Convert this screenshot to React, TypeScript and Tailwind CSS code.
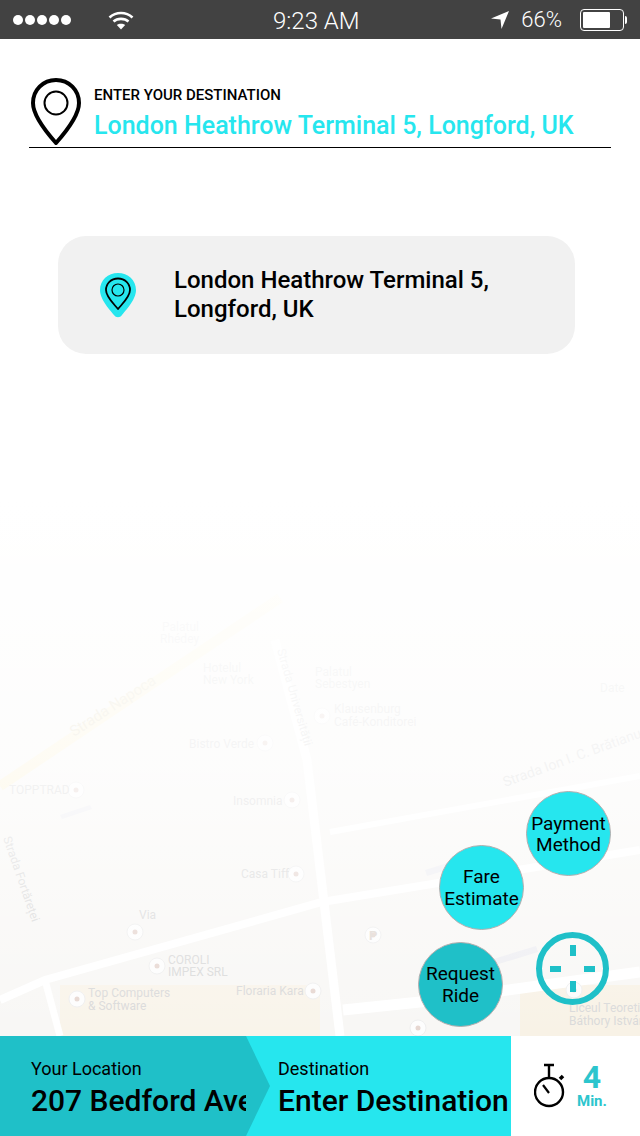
import React from 'react'

const font = "font-['Roboto',sans-serif]"

const labels: { x: number; y: number; t: string; rotate?: number; size?: number; fill?: string }[] = [
    { x: 162, y: 631, t: 'Palatul' },
    { x: 160, y: 643, t: 'Rhédey' },
    { x: 203, y: 672, t: 'Hotelul' },
    { x: 203, y: 684, t: 'New York' },
    { x: 189, y: 748, t: 'Bistro Verde' },
    { x: 9, y: 794, t: 'TOPPTRAD' },
    { x: 233, y: 805, t: 'Insomnia' },
    { x: 241, y: 878, t: 'Casa Tiff' },
    { x: 139, y: 919, t: 'Via' },
    { x: 168, y: 964, t: 'COROLI' },
    { x: 168, y: 976, t: 'IMPEX SRL' },
    { x: 88, y: 997, t: 'Top Computers' },
    { x: 88, y: 1010, t: '& Software' },
    { x: 236, y: 995, t: 'Floraria Kara' },
    { x: 315, y: 676, t: 'Palatul' },
    { x: 315, y: 688, t: 'Sebestyen' },
    { x: 334, y: 713, t: 'Klausenburg' },
    { x: 334, y: 726, t: 'Café-Konditorei' },
    { x: 600, y: 692, t: 'Date' },
    { x: 569, y: 1012, t: 'Liceul Teoretic' },
    { x: 569, y: 1025, t: 'Báthory István' },
    { x: 74, y: 737, t: 'Strada Napoca', rotate: -33, size: 15, fill: '#e3dcc4' },
    { x: 277, y: 650, t: 'Strada Universității', rotate: 74, size: 12 },
    { x: 3, y: 838, t: 'Strada Fortăreței', rotate: 71, size: 12 },
    { x: 505, y: 787, t: 'Strada Ion I. C. Brătianu', rotate: -20, size: 14 },
]

const pois = [
    [76, 790], [265, 743], [292, 800], [296, 874], [135, 932], [157, 966], [77, 999], [313, 991],
    [373, 935], [418, 1028], [574, 990], [322, 716],
]

function MapLayer() {
    return (
        <svg viewBox="0 500 640 536" className="block w-[640px] h-[536px]">
            <rect x="0" y="500" width="640" height="536" fill="#f8f7f5" />
            <rect x="60" y="985" width="260" height="51" fill="#f9f4ea" />
            <rect x="520" y="985" width="120" height="51" fill="#f8f2e6" />
            <path d="M0 786 L280 598" stroke="#fbf3d8" strokeWidth="10" fill="none" />
            <g stroke="#ffffff" fill="none">
                <path d="M0 1000 L45 980 L322 902 L640 850" strokeWidth="8" />
                <path d="M45 980 L60 1036" strokeWidth="7" />
                <path d="M275 640 L307 760 L340 1036" strokeWidth="9" />
                <path d="M343 1010 L420 1002 L640 972" strokeWidth="11" />
                <path d="M330 832 L640 776" strokeWidth="6" />
            </g>
            <g fill="#eeeef2">
                <path d="M425 870 l45 -14 l2 6 l-45 14z" />
                <path d="M490 960 l46 -14 l2 6 l-46 14z" />
                <path d="M60 815 l30 -10 l2 4 l-30 10z" />
            </g>
            {pois.map(([x, y], i) => (
                <g key={i}>
                    <circle cx={x} cy={y} r="8" fill="#fdfdfd" stroke="#efefef" />
                    <circle cx={x} cy={y} r="2.5" fill="#e6d6d0" />
                </g>
            ))}
            <text x="369" y="940" fontSize="13" fontWeight="700" fill="#e0d8d2" fontFamily="Roboto">P</text>
            <g fontFamily="Roboto, sans-serif">
                {labels.map((l) => (
                    <text
                        key={l.t + l.y}
                        x={l.x}
                        y={l.y}
                        fontSize={l.size ?? 12}
                        fill={l.fill ?? '#d9d9d9'}
                        transform={l.rotate ? `rotate(${l.rotate} ${l.x} ${l.y})` : undefined}
                    >
                        {l.t}
                    </text>
                ))}
            </g>
        </svg>
    )
}

function PinIcon({ className }: { className: string }) {
    return (
        <svg viewBox="0 0 50 67" className={className} fill="none" stroke="#000">
            <path d="M25 2C12 2 2 12 2 25C2 38 17 56 25 65C33 56 48 38 48 25C48 12 38 2 25 2Z" strokeWidth="4" strokeLinejoin="round" />
            <circle cx="25" cy="25" r="11.5" strokeWidth="2" />
        </svg>
    )
}

function StatusBar() {
    return (
        <div className="relative flex h-[39px] shrink-0 items-center bg-[#424242] pl-[13px] pr-[13px] text-white">
            <div className="flex gap-[2px]">
                {[0, 1, 2, 3, 4].map((i) => (
                    <span key={i} className="h-[10px] w-[10px] rounded-full bg-white" />
                ))}
            </div>
            <svg viewBox="0 0 26 20" className="ml-[37px] h-[20px] w-[26px]" fill="none" stroke="#fff" strokeWidth="2.6">
                <path d="M1.5 7.5C8 1.5 18 1.5 24.5 7.5" />
                <path d="M5.5 11.5C9.5 8 16.5 8 20.5 11.5" />
                <path d="M13 19.5L8.8 15C11 13.2 15 13.2 17.2 15Z" fill="#fff" stroke="none" />
            </svg>
            <span className="absolute left-[273px] top-[5px] font-['Roboto',sans-serif] text-[24px] leading-[32px] font-light">9:23 AM</span>
            <svg viewBox="0 0 18 18" className="ml-auto h-[18px] w-[18px]" fill="#fff">
                <path d="M18 0L0 7.5L9.5 8.5L10.5 18Z" />
            </svg>
            <span className="ml-[12px] font-['Roboto',sans-serif] text-[22px] font-light">66%</span>
            <div className="ml-[18px] flex items-center">
                <div className="h-[22px] w-[44px] rounded-[4px] border border-white p-[2px]">
                    <div className="h-full w-[27px] rounded-[1px] bg-white" />
                </div>
                <div className="ml-[1px] h-[8px] w-[2px] rounded-r-sm bg-white" />
            </div>
        </div>
    )
}

function CircleButton({ lines, className }: { lines: string[]; className: string }) {
    return (
        <button className={`absolute flex h-[85px] w-[85px] flex-col items-center justify-center rounded-full border border-[#b5aeae] text-[19px] leading-[21px] text-black ${className}`}>
            {lines.map((l) => (
                <span key={l}>{l}</span>
            ))}
        </button>
    )
}

export default function App() {
    return (
        <div className={`flex h-[1136px] w-[640px] flex-col overflow-hidden bg-white ${font}`}>
            <StatusBar />

            <main className="relative flex-1">
                <div className="absolute bottom-0 left-0">
                    <MapLayer />
                    <div className="absolute inset-0 bg-gradient-to-b from-white via-white/70 to-white/0" />
                </div>

                <div className="relative px-[29px] pt-[39px]">
                    <div className="flex items-start border-b border-black pb-[2px] pl-[2px]">
                        <PinIcon className="h-[67px] w-[50px] shrink-0" />
                        <div className="ml-[13px]">
                            <p className="pt-[7px] text-[15px] leading-[20px] font-medium text-black">ENTER YOUR DESTINATION</p>
                            <p className="mt-[4px] text-[25px] leading-[34px] font-medium text-[#26e6ee]">London Heathrow Terminal 5, Longford, UK</p>
                        </div>
                    </div>
                </div>

                <div className="relative mx-[58px] mt-[88px] flex h-[118px] w-[517px] items-center rounded-[28px] bg-[#f1f1f1] pl-[41px]">
                    <svg viewBox="0 0 38 46" className="h-[46px] w-[38px] shrink-0">
                        <path d="M19 1C9 1 1 8 1 18C1 28 12 39 15 43C17 46 21 46 23 43C26 39 37 28 37 18C37 8 29 1 19 1Z" fill="#26e6ee" />
                        <path d="M19 6.5C12 6.5 7 11.5 7 18C7 25 15 32 19 37C23 32 31 25 31 18C31 11.5 26 6.5 19 6.5Z" fill="none" stroke="#000" strokeWidth="1.8" strokeLinejoin="round" />
                        <circle cx="19" cy="18" r="6" fill="none" stroke="#000" strokeWidth="1.2" />
                    </svg>
                    <p className="ml-[37px] text-[24px] leading-[29px] font-medium text-black">
                        London Heathrow Terminal 5,
                        <br />
                        Longford, UK
                    </p>
                </div>

                <CircleButton lines={['Payment', 'Method']} className="left-[526px] top-[752px] bg-[#26e6ee]" />
                <CircleButton lines={['Fare', 'Estimate']} className="left-[439px] top-[806px] bg-[#26e6ee] !leading-[22px]" />
                <CircleButton lines={['Request', 'Ride']} className="left-[418px] top-[903px] bg-[#1fc0c8] !leading-[22px]" />

                <div className="absolute left-[536px] top-[893px] h-[73px] w-[73px] rounded-full border-[6px] border-[#1fc0c8]">
                    <span className="absolute left-[28px] top-[7px] h-[11px] w-[6px] bg-[#1fc0c8]" />
                    <span className="absolute bottom-[7px] left-[28px] h-[11px] w-[6px] bg-[#1fc0c8]" />
                    <span className="absolute left-[8px] top-[28px] h-[6px] w-[11px] bg-[#1fc0c8]" />
                    <span className="absolute right-[8px] top-[28px] h-[6px] w-[11px] bg-[#1fc0c8]" />
                </div>
            </main>

            <footer className="flex h-[100px] shrink-0 bg-white">
                <div className="relative w-[246px] bg-[#1fc0c8] pl-[31px] pt-[24px]">
                    <p className="text-[18px] leading-[18px] text-black">Your Location</p>
                    <p className="mt-[5px] whitespace-nowrap text-[30px] leading-[36px] font-medium text-black">207 Bedford Ave.</p>
                </div>
                <div className="relative w-[265px] bg-[#26e6ee] pl-[32px] pt-[24px]">
                    <div className="absolute left-0 top-0 h-full w-[24px] bg-[#1fc0c8] [clip-path:polygon(0_0,100%_50%,0_100%)]" />
                    <p className="relative text-[18px] leading-[18px] text-black">Destination</p>
                    <p className="relative mt-[5px] whitespace-nowrap text-[30px] leading-[36px] font-medium text-black">Enter Destination</p>
                </div>
                <div className="flex flex-1 items-center pl-[23px]">
                    <svg viewBox="0 0 32 46" className="h-[46px] w-[32px]" fill="none" stroke="#000" strokeWidth="2.4">
                        <circle cx="15" cy="29" r="14" />
                        <path d="M10 2H20M15 2V14" />
                        <path d="M26 16L29 13" strokeWidth="3.5" />
                        <path d="M9 22L15 30" strokeWidth="2.2" />
                    </svg>
                    <div className="ml-[11px] flex flex-col items-center text-[#2cc5cd]">
                        <span className="text-[32px] leading-[30px] font-bold">4</span>
                        <span className="text-[15px] leading-[18px] font-bold">Min.</span>
                    </div>
                </div>
            </footer>
        </div>
    )
}
